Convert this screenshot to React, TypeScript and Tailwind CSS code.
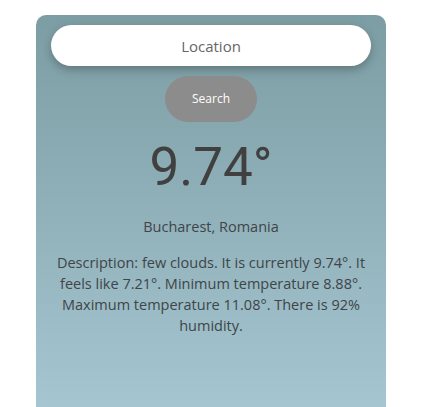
import { useState } from 'react'

export default function App() {
  const [location, setLocation] = useState('')

  return (
    <div className="min-h-[407px] bg-white pt-[15px] font-['Open_Sans','Noto_Sans',sans-serif]">
      <div className="ml-[36px] w-[350px] h-[392px] rounded-t-[10px] bg-gradient-to-b from-[#7c9da3] to-[#a5c5d1] flex flex-col items-center px-[15px] pt-[10px]">
        {/* Search */}
        <input
          type="text"
          value={location}
          onChange={(e) => setLocation(e.target.value)}
          placeholder="Location"
          className="w-[320px] h-[41px] rounded-full bg-white text-center text-[15px] text-[#555] placeholder-[#666] shadow-[0_4px_10px_rgba(0,0,0,0.25)] outline-none"
        />
        <button className="mt-[10px] w-[92px] h-[46px] rounded-full bg-[#8c8c8c] text-white text-[12px]">
          Search
        </button>

        {/* Weather */}
        <div className="mt-[10px] text-[53px] leading-[70px] font-normal text-[#404040] font-['Roboto',sans-serif]">
          9.74°
        </div>
        <div className="mt-[14px] text-[14.5px] text-[#3f4548]">Bucharest, Romania</div>
        <p className="mt-[14px] w-[320px] text-center text-[14.5px] leading-[21px] text-[#3f4548]">
          Description: few clouds. It is currently 9.74°. It feels like 7.21°. Minimum temperature 8.88°. Maximum
          temperature 11.08°. There is 92% humidity.
        </p>
      </div>
    </div>
  )
}
